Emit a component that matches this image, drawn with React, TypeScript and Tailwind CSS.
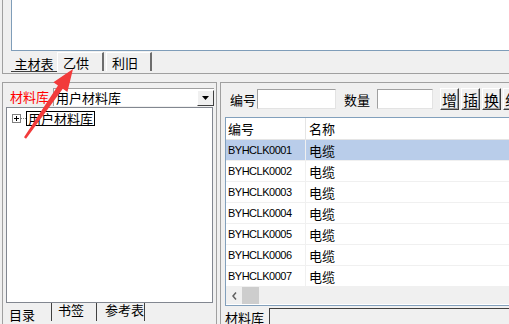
import React from "react";

const cjk = "font-['Noto_Sans_CJK_SC','Noto_Sans',sans-serif]";
const latin = "font-['Liberation_Sans','Noto_Sans_CJK_SC',sans-serif]";

const rows = ["0001", "0002", "0003", "0004", "0005", "0006", "0007"];

// raised tab used in the strips (unselected)
const RaisedTab = ({ label, w }: { label: string; w: string }) => (
  <div className={`${w} h-[19px] flex items-center pl-[5px] border-t border-l border-white border-r-2 border-r-[#6d6d6d] bg-[#f0f0f0] text-[13px] leading-none text-black ${cjk}`}>
    {label}
  </div>
);

const Input = ({ w }: { w: string }) => (
  <div className={`${w} h-[20px] shrink-0 bg-white border-t border-l border-[#a0a0a0] border-r border-b border-r-[#e3e3e3] border-b-[#e3e3e3]`} />
);

const ToolButton = ({ label }: { label: string }) => (
  <div className={`w-[19px] h-[22px] shrink-0 flex items-center justify-center bg-[#f0f0f0] border-t border-l border-white border-r border-b border-r-[#404040] border-b-[#404040] shadow-[inset_-1px_-1px_0_#a0a0a0] text-[15px] leading-none text-black ${cjk}`}>
    {label}
  </div>
);

export default function App() {
  return (
    <div className="relative w-[509px] h-[324px] overflow-hidden bg-[#f0f0f0] flex flex-col">
      {/* top document area */}
      <div className="h-[74px] shrink-0 ml-[2px] border-l border-b border-[#a0a0a0] flex flex-col pl-[8px]">
        <div className="h-[51px] bg-white border-l border-b border-[#7f9db9]" />
        <div className="flex h-[22px] items-start">
          <div className={`w-[46px] h-[21px] flex items-end justify-center pb-[1px] border-b border-[#404040] text-[13px] leading-none text-black ${cjk}`}>
            主材表
          </div>
          <div className="mt-[1px] flex">
            <RaisedTab label="乙供" w="w-[47px]" />
            <div className="w-[2px]" />
            <RaisedTab label="利旧" w="w-[46px]" />
          </div>
        </div>
      </div>

      <div className="flex flex-1 pt-[8px]">
        {/* left library panel */}
        <div className="w-[215px] shrink-0 ml-[2px] border-l border-t border-r border-[#a0a0a0] flex flex-col">
          <div className="h-[24px] pt-[5px] flex items-start">
            <span className={`pl-[7px] w-[50px] shrink-0 text-[13px] leading-[18px] text-[#ff0000] ${cjk}`}>材料库</span>
            <div className="w-[161px] shrink-0 h-[18px] bg-white border-t border-l border-[#a0a0a0] flex items-center">
              <span className={`flex-1 pl-[2px] text-[13px] leading-none text-black whitespace-nowrap ${cjk}`}>用户材料库</span>
              <div className="w-[17px] h-[16px] shrink-0 bg-[#f0f0f0] border-t border-l border-white border-r border-b border-r-[#404040] border-b-[#404040] flex items-center justify-center">
                <svg width="7" height="4" viewBox="0 0 7 4"><path d="M0 0h7L3.5 4z" fill="#000" /></svg>
              </div>
            </div>
          </div>
          <div className="ml-[3px] w-[207px] h-[196px] bg-white border border-[#828790] pt-[2px] pl-[5px]">
            <div className="flex items-center h-[16px]">
              <svg width="9" height="9" viewBox="0 0 9 9" className="shrink-0">
                <rect x="0.5" y="0.5" width="8" height="8" fill="#fff" stroke="#808080" />
                <path d="M2 4.5h5M4.5 2v5" stroke="#000" />
              </svg>
              <div className="w-[5px] border-t border-dotted border-[#808080]" />
              <span className={`border border-black px-[1px] text-[13px] leading-[13px] text-black ${cjk}`}>用户材料库</span>
            </div>
          </div>
          <div className="flex h-[19px] items-start">
            <div className={`w-[48px] h-[18px] flex items-end pl-[6px] text-[13px] leading-none text-black ${cjk}`}>目录</div>
            <div className={`w-[46px] h-[18px] flex items-start pl-[6px] border-l border-r border-[#404040] text-[13px] leading-[14px] text-black ${cjk}`}>书签</div>
            <div className={`w-[48px] h-[18px] flex items-start pl-[8px] border-r border-[#404040] text-[13px] leading-[14px] text-black ${cjk}`}>参考表</div>
          </div>
        </div>

        {/* splitter */}
        <div className="w-[3px] shrink-0" />

        {/* right list panel */}
        <div className="flex-1 min-w-0 overflow-hidden border-l border-t border-[#a0a0a0] flex flex-col">
          <div className="mt-[5px] h-[22px] flex items-center">
            <span className={`pl-[9px] w-[36px] shrink-0 text-[13px] leading-none text-black ${cjk}`}>编号</span>
            <Input w="w-[79px]" />
            <span className={`pl-[8px] w-[41px] shrink-0 text-[13px] leading-none text-black ${cjk}`}>数量</span>
            <Input w="w-[56px]" />
            <div className="ml-[7px] flex gap-[2px] shrink-0">
              <ToolButton label="增" />
              <ToolButton label="插" />
              <ToolButton label="换" />
              <ToolButton label="组" />
            </div>
          </div>
          <div className="mt-[7px] ml-[4px] h-[189px] bg-white border border-r-0 border-[#82a0bc] flex flex-col overflow-hidden">
            <div className="h-[22px] shrink-0 flex border-b border-[#e5e5e5] bg-white">
              <div className={`w-[80px] pl-[2px] flex items-center border-r border-[#e5e5e5] text-[13px] leading-none text-black ${cjk}`}>编号</div>
              <div className={`flex-1 pl-[3px] flex items-center text-[13px] leading-none text-black ${cjk}`}>名称</div>
            </div>
            {rows.map((n, i) => (
              <div key={n} className={`h-[21px] shrink-0 flex border-b border-[#f0f0f0] ${i === 0 ? "bg-[#b9cdea]" : "bg-white"}`}>
                <div className={`w-[80px] pl-[2px] flex items-center border-r border-[#f0f0f0] text-[11px] tracking-[-0.5px] leading-none text-[#000] ${latin}`}>BYHCLK{n}</div>
                <div className={`flex-1 pl-[3px] flex items-center text-[13px] leading-none text-black ${cjk}`}>电缆</div>
              </div>
            ))}
            <div className="h-[17px] shrink-0 bg-[#f0f0f0] flex items-center">
              <div className="w-[16px] flex items-center justify-center">
                <svg width="5" height="8" viewBox="0 0 5 8"><path d="M4 0.5L1 4l3 3.5" fill="none" stroke="#606060" strokeWidth="1.5" /></svg>
              </div>
              <div className="w-[17px] h-[17px] bg-[#cdcdcd]" />
            </div>
          </div>
          <div className="flex h-[19px] items-start">
            <div className={`w-[48px] shrink-0 h-[18px] flex items-end pl-[4px] text-[13px] leading-none text-black whitespace-nowrap ${cjk}`}>材料库</div>
            <div className="flex-1 mt-[2px] h-[17px] border-l border-t border-[#404040]" />
          </div>
        </div>
      </div>

      {/* red annotation arrow */}
      <svg className="absolute left-0 top-0 pointer-events-none" width="509" height="324" viewBox="0 0 509 324">
        <polygon
          points="24,137.2 58,85.4 53.4,82.2 73,69 67.4,92 62.8,88.8 26,138.8"
          fill="#f23b3b"
        />
      </svg>
    </div>
  );
}
